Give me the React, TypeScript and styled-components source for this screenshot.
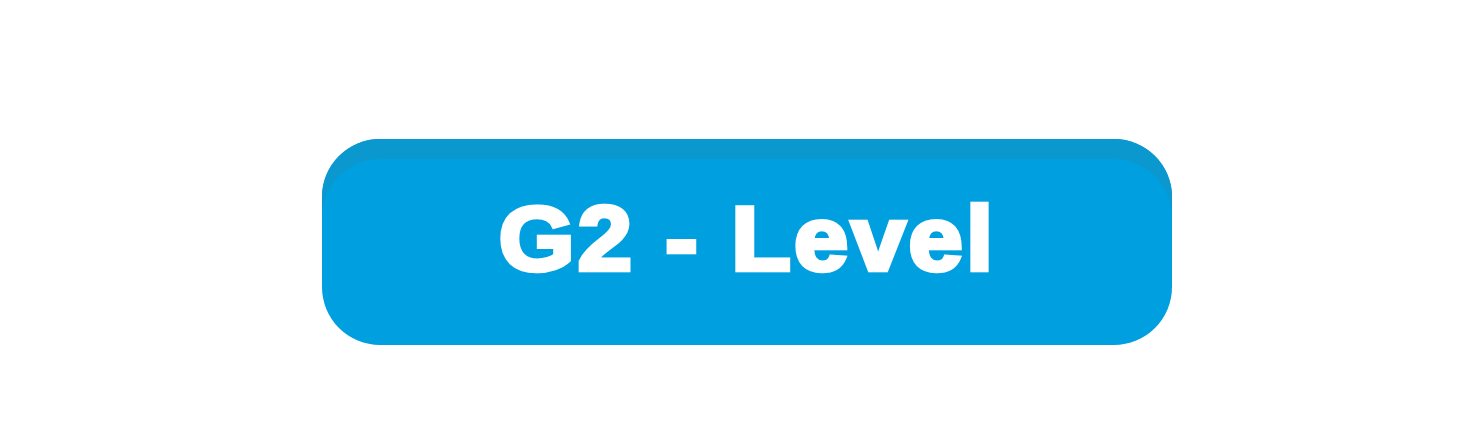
import React from "react";
import styled, { createGlobalStyle } from "styled-components";

const Global = createGlobalStyle`
  html, body { margin: 0; padding: 0; background: #ffffff; }
  body { font-family: "Liberation Sans", Arial, sans-serif; }
`;

const Page = styled.div`
  width: 1462px;
  height: 436px;
  padding: 139px 0 0 322px;
  box-sizing: border-box;
`;

const LevelButton = styled.button`
  width: 850px;
  height: 206px;
  border: none;
  border-radius: 58px;
  background: #009fe0;
  box-shadow: inset 0 20px 0 0 #0a98cf;
  display: flex;
  align-items: center;
  justify-content: center;
  padding: 0 0 8px 0;
  margin: 0;
  cursor: pointer;
`;

const Label = styled.span`
  display: inline-block;
  font-family: "Liberation Sans", Arial, sans-serif;
  font-weight: 700;
  font-size: 91px;
  line-height: 1;
  color: #ffffff;
  -webkit-text-stroke: 4.5px #ffffff;
  letter-spacing: 3px;
  white-space: pre;
  transform: scaleX(1.07);
`;

export default function App() {
  return (
    <>
      <Global />
      <Page>
        <LevelButton type="button">
          <Label>G2 - Level</Label>
        </LevelButton>
      </Page>
    </>
  );
}
